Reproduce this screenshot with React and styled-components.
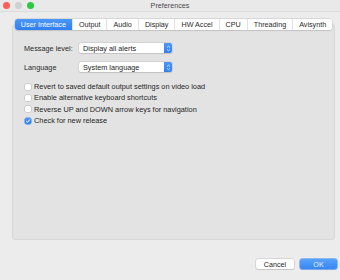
import styled, { createGlobalStyle } from 'styled-components';

const GlobalStyle = createGlobalStyle`
  html, body {
    margin: 0;
    padding: 0;
    background: #ececec;
  }
  body {
    font-family: 'Liberation Sans', Arial, sans-serif;
    color: #262626;
  }
`;

const tabs = ['User Interface', 'Output', 'Audio', 'Display', 'HW Accel', 'CPU', 'Threading', 'Avisynth'];

const options = [
  { label: 'Revert to saved default output settings on video load', checked: false },
  { label: 'Enable alternative keyboard shortcuts', checked: false },
  { label: 'Reverse UP and DOWN arrow keys for navigation', checked: false },
  { label: 'Check for new release', checked: true },
];

const Popup = ({ value }) => (
  <PopupBox>
    <span>{value}</span>
    <PopupArrows>
      <svg width='5' height='7' viewBox='0 0 5 7'>
        <path d='M1 2.6 L2.5 1.2 L4 2.6 M1 4.4 L2.5 5.8 L4 4.4' stroke='#fff' strokeWidth='0.8' fill='none' />
      </svg>
    </PopupArrows>
  </PopupBox>
);

export default function App() {
  return (
    <>
      <GlobalStyle />
      <Window>
        <TitleBar>
          <Lights>
            <Light color='#fc5f57' />
            <Light color='#d0d0d0' />
            <Light color='#2ac940' />
          </Lights>
          <Title>Preferences</Title>
          <span />
        </TitleBar>

        <Body>
          <TabBar>
            {tabs.map((t, i) => (
              <Tab key={t} active={i === 0}>{t}</Tab>
            ))}
          </TabBar>

          <Panel>
            <FieldGrid>
              <Label>Message level:</Label>
              <Popup value='Display all alerts' />
              <Label>Language</Label>
              <Popup value='System language' />
            </FieldGrid>

            <CheckList>
              {options.map((o) => (
                <CheckRow key={o.label}>
                  <Box checked={o.checked}>
                    {o.checked && (
                      <svg width='6' height='6' viewBox='0 0 6 6'>
                        <path d='M1.2 3.1 L2.5 4.4 L4.9 1.4' stroke='#fff' strokeWidth='1' fill='none' />
                      </svg>
                    )}
                  </Box>
                  {o.label}
                </CheckRow>
              ))}
            </CheckList>
          </Panel>
        </Body>

        <Footer>
          <Button>Cancel</Button>
          <Button primary>OK</Button>
        </Footer>
      </Window>
    </>
  );
}

const Window = styled.div`
  width: 340px;
  height: 280px;
  display: flex;
  flex-direction: column;
  background: #ececec;
  overflow: hidden;
`;

const TitleBar = styled.div`
  height: 12px;
  display: grid;
  grid-template-columns: 1fr auto 1fr;
  align-items: center;
  background: #e9e9e9;
  border-bottom: 1px solid #dcdcdc;
  box-sizing: border-box;
`;

const Lights = styled.div`
  display: flex;
  gap: 5px;
  padding-left: 3px;
`;

const Light = styled.div`
  width: 7px;
  height: 7px;
  border-radius: 50%;
  background: ${(p) => p.color};
`;

const Title = styled.div`
  font-size: 7.2px;
  color: #4a4a4a;
`;

const Body = styled.div`
  padding: 7px 5px 0 12px;
  display: flex;
  flex-direction: column;
`;

const TabBar = styled.div`
  display: flex;
  align-self: center;
  height: 11px;
  background: #fff;
  border-radius: 3px;
  box-shadow: 0 0 0 0.5px #c6c6c6, 0 0.5px 1px rgba(0, 0, 0, 0.15);
  position: relative;
  z-index: 1;
  overflow: hidden;
  white-space: nowrap;
`;

const Tab = styled.div`
  flex-shrink: 0;
  display: flex;
  align-items: center;
  justify-content: center;
  padding: 0 6px;
  font-size: 7.2px;
  color: ${(p) => (p.active ? '#fff' : '#2a2a2a')};
  background: ${(p) => (p.active ? 'linear-gradient(#4b98f8, #2f7ff2)' : '#fff')};
  border-left: 1px solid ${(p) => (p.active ? 'transparent' : '#e2e2e2')};
  &:first-child {
    border-left: none;
  }
`;

const Panel = styled.div`
  margin-top: -6px;
  height: 216px;
  box-sizing: border-box;
  padding: 18px 0 0 11px;
  background: #e3e3e3;
  border: 1px solid #d8d8d8;
  border-radius: 3px;
`;

const FieldGrid = styled.div`
  display: grid;
  grid-template-columns: 55px 93px;
  row-gap: 9px;
  align-items: center;
`;

const Label = styled.div`
  font-size: 7.3px;
  color: #2a2a2a;
`;

const PopupBox = styled.div`
  height: 10px;
  display: flex;
  align-items: center;
  justify-content: space-between;
  background: #fff;
  border-radius: 2px;
  box-shadow: 0 0 0 0.5px #c4c4c4, 0 0.5px 1px rgba(0, 0, 0, 0.15);
  font-size: 7.3px;
  color: #262626;
  overflow: hidden;
  span {
    padding-left: 4px;
  }
`;

const PopupArrows = styled.div`
  width: 8px;
  height: 10px;
  display: flex;
  align-items: center;
  justify-content: center;
  background: linear-gradient(#4b98f8, #2f7ff2);
`;

const CheckList = styled.div`
  margin-top: 9px;
  display: flex;
  flex-direction: column;
  padding-left: 1px;
`;

const CheckRow = styled.div`
  height: 11.33px;
  display: flex;
  align-items: center;
  gap: 3px;
  font-size: 7.35px;
  color: #262626;
  white-space: nowrap;
`;

const Box = styled.div`
  width: 6px;
  height: 6px;
  display: flex;
  align-items: center;
  justify-content: center;
  border-radius: 1.5px;
  background: ${(p) => (p.checked ? 'linear-gradient(#4b98f8, #2f7ff2)' : '#fff')};
  box-shadow: 0 0 0 0.5px ${(p) => (p.checked ? '#2f7ff2' : '#b8b8b8')};
`;

const Footer = styled.div`
  margin-top: auto;
  display: flex;
  justify-content: flex-end;
  gap: 6px;
  padding: 0 3px 11px 0;
`;

const Button = styled.div`
  width: ${(p) => (p.primary ? '37px' : '38px')};
  height: 10px;
  display: flex;
  align-items: center;
  justify-content: center;
  font-size: 7.2px;
  border-radius: 2px;
  color: ${(p) => (p.primary ? '#e8f1ff' : '#262626')};
  background: ${(p) => (p.primary ? 'linear-gradient(#5aa2fa, #3586f4)' : '#fff')};
  box-shadow: 0 0 0 0.5px ${(p) => (p.primary ? '#3586f4' : '#c4c4c4')}, 0 0.5px 1px rgba(0, 0, 0, 0.15);
`;
